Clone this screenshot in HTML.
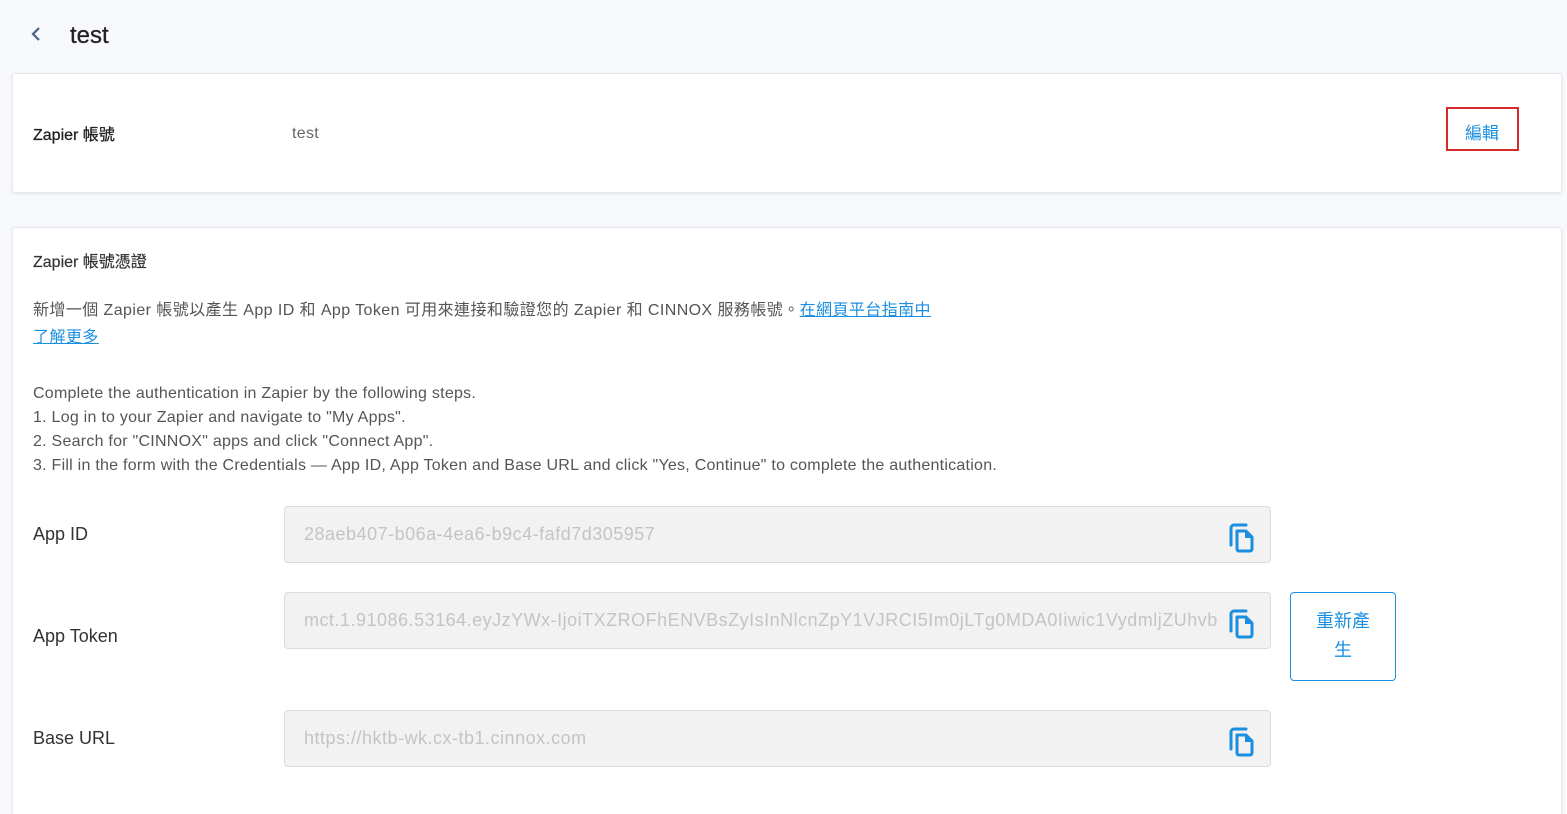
<!DOCTYPE html>
<html><head><meta charset="utf-8"><style>
*{margin:0;padding:0;box-sizing:border-box}
html{width:1567px;height:814px;overflow:hidden}
body{width:1567px;height:814px;overflow:hidden;background:#f7f9fc;font-family:"Liberation Sans","Noto Sans CJK TC",sans-serif;color:#555;position:relative}
.a{position:absolute;white-space:nowrap}
.card{position:absolute;background:#fff;border:1px solid #e6e8eb;box-shadow:0 1px 3px rgba(0,0,0,.08);border-radius:3px}
.in{position:absolute;left:284px;width:987px;height:57px;background:#f2f2f2;border:1px solid #dcdcdc;border-radius:4px;font-size:18px;color:#c4c4c4;padding-left:19px;line-height:54px;overflow:hidden;white-space:nowrap;letter-spacing:0.5px}
.in svg{position:absolute;right:16px;top:16px;background:#f2f2f2}
.lbl{font-size:18px;color:#333}
a{color:#1a8fe0}
</style></head><body>
<svg class="a" style="left:29px;top:26px" width="14" height="16" viewBox="0 0 14 16"><path d="M10 2L4 8l6 6" stroke="#4a6385" stroke-width="2.2" fill="none"/></svg>
<div class="a" style="left:70px;top:22px;font-size:24px;color:#222;-webkit-text-stroke:0.3px #222">test</div>
<div class="card" style="left:12px;top:73px;width:1550px;height:120px"></div>
<div class="a" style="left:33px;top:121px;font-size:16px;color:#222;-webkit-text-stroke:0.3px #222">Zapier 帳號</div>
<div class="a" style="left:292px;top:125px;font-size:16px;color:#666;letter-spacing:0.3px">test</div>
<div class="a" style="left:1446px;top:107px;width:73px;height:44px;border:2px solid #d62a2a"></div>
<div class="a" style="left:1465px;top:119px;font-size:17px;color:#1a8fe0">編輯</div>
<div class="card" style="left:12px;top:227px;width:1550px;height:600px"></div>
<div class="a" style="left:33px;top:248px;font-size:16px;color:#333;-webkit-text-stroke:0.2px #333">Zapier 帳號憑證</div>
<div class="a" style="left:33px;top:296px;font-size:16px;color:#555;letter-spacing:0.42px">新增一個 Zapier 帳號以產生 App ID 和 App Token 可用來連接和驗證您的 Zapier 和 CINNOX 服務帳號。<a href="#">在網頁平台指南中</a></div>
<div class="a" style="left:33px;top:323px;font-size:16px;letter-spacing:0.45px"><a href="#">了解更多</a></div>
<div class="a" style="left:33px;top:382px;font-size:16px;line-height:24px;color:#555;letter-spacing:0.25px">Complete the authentication in Zapier by the following steps.<br>1. Log in to your Zapier and navigate to "My Apps".<br>2. Search for "CINNOX" apps and click "Connect App".<br>3. Fill in the form with the Credentials — App ID, App Token and Base URL and click "Yes, Continue" to complete the authentication.</div>
<div class="a lbl" style="left:33px;top:524px">App ID</div>
<div class="a lbl" style="left:33px;top:626px">App Token</div>
<div class="a lbl" style="left:33px;top:728px">Base URL</div>
<div class="in" style="top:506px">28aeb407-b06a-4ea6-b9c4-fafd7d305957<svg width="26" height="30" viewBox="0 0 26 30"><path d="M3 22V5a3 3 0 0 1 3-3h12" stroke="#1a8fe0" stroke-width="3" fill="none" stroke-linecap="round"/><path d="M9 8h9l6 6v12a2 2 0 0 1-2 2H11a2 2 0 0 1-2-2z" stroke="#1a8fe0" stroke-width="3" fill="none" stroke-linejoin="round"/><path d="M17 8v7h7z" fill="#1a8fe0"/></svg></div>
<div class="in" style="top:592px;padding-right:60px">mct.1.91086.53164.eyJzYWx-IjoiTXZROFhENVBsZyIsInNlcnZpY1VJRCI5Im0jLTg0MDA0Iiwic1VydmljZUhvb<svg width="26" height="30" viewBox="0 0 26 30"><path d="M3 22V5a3 3 0 0 1 3-3h12" stroke="#1a8fe0" stroke-width="3" fill="none" stroke-linecap="round"/><path d="M9 8h9l6 6v12a2 2 0 0 1-2 2H11a2 2 0 0 1-2-2z" stroke="#1a8fe0" stroke-width="3" fill="none" stroke-linejoin="round"/><path d="M17 8v7h7z" fill="#1a8fe0"/></svg></div>
<div class="in" style="top:710px">https://hktb-wk.cx-tb1.cinnox.com<svg width="26" height="30" viewBox="0 0 26 30"><path d="M3 22V5a3 3 0 0 1 3-3h12" stroke="#1a8fe0" stroke-width="3" fill="none" stroke-linecap="round"/><path d="M9 8h9l6 6v12a2 2 0 0 1-2 2H11a2 2 0 0 1-2-2z" stroke="#1a8fe0" stroke-width="3" fill="none" stroke-linejoin="round"/><path d="M17 8v7h7z" fill="#1a8fe0"/></svg></div>
<div class="a" style="left:1290px;top:592px;width:106px;height:89px;border:1px solid #1a8fe0;border-radius:4px;color:#1a8fe0;font-size:18px;text-align:center;line-height:29px;padding-top:14px;white-space:normal;padding-left:18px;padding-right:18px">重新產生</div>
</body></html>
